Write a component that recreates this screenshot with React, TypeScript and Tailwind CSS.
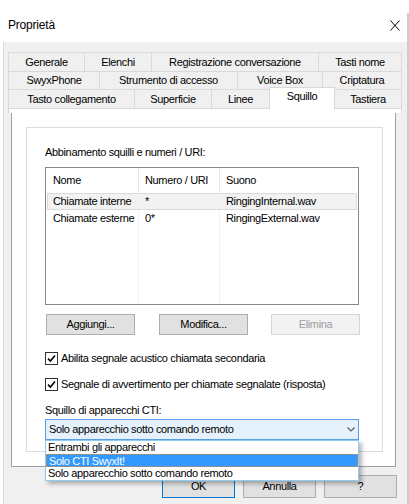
import React from 'react';
import clsx from 'clsx';

interface TabSpec {
  label: string;
  width: string;
  selected?: boolean;
  noLeft?: boolean;
  last?: boolean;
}

interface TabRowProps {
  tabs: TabSpec[];
  height: string;
}

const tabRows: { height: string; tabs: TabSpec[] }[] = [
  {
    height: 'h-[19px]',
    tabs: [
      { label: 'Generale', width: 'w-[76px]' },
      { label: 'Elenchi', width: 'w-[67px]' },
      { label: 'Registrazione conversazione', width: 'w-[167px]' },
      { label: 'Tasti nome', width: 'w-[84px]', last: true },
    ],
  },
  {
    height: 'h-[18px]',
    tabs: [
      { label: 'SwyxPhone', width: 'w-[91px]' },
      { label: 'Strumento di accesso', width: 'w-[138px]' },
      { label: 'Voice Box', width: 'w-[85px]' },
      { label: 'Criptatura', width: 'w-[80px]', last: true },
    ],
  },
  {
    height: 'h-[19px]',
    tabs: [
      { label: 'Tasto collegamento', width: 'w-[126px]' },
      { label: 'Superficie', width: 'w-[77px]' },
      { label: 'Linee', width: 'w-[58px]' },
      { label: 'Squillo', width: 'w-[66px]', selected: true, last: true },
      { label: 'Tastiera', width: 'w-[67px]', noLeft: true, last: true },
    ],
  },
];

const TabRow = ({ tabs, height }: TabRowProps) => {
  return (
    <div className={clsx('flex items-end', height)}>
      {tabs.map((tab) =>
        tab.selected ? (
          <div
            key={tab.label}
            className={clsx(
              'relative z-10 -mb-px flex h-[22px] justify-center border-x border-t border-[#d9d9d9] bg-white pt-[2px]',
              tab.width
            )}
          >
            {tab.label}
          </div>
        ) : (
          <div
            key={tab.label}
            className={clsx(
              'flex h-full items-center justify-center border-t border-[#d9d9d9] bg-[#f0f0f0]',
              tab.width,
              !tab.noLeft && 'border-l',
              tab.last && 'border-r'
            )}
          >
            {tab.label}
          </div>
        )
      )}
    </div>
  );
};

const CheckBox = ({ label }: { label: string }) => {
  return (
    <div className="flex h-[13px] items-center gap-[3px]">
      <div className="h-[13px] w-[13px] border border-[#333333] bg-white">
        <svg viewBox="0 0 11 11" className="h-[11px] w-[11px]">
          <path d="M2 5.6 L4.4 8 L9 2.6" fill="none" stroke="#000" strokeWidth="1.6" />
        </svg>
      </div>
      <span>{label}</span>
    </div>
  );
};

const DialogButton = ({
  label,
  width,
  disabled,
  isDefault,
  height = 'h-[21px]',
  className,
}: {
  label: string;
  width: string;
  disabled?: boolean;
  isDefault?: boolean;
  height?: string;
  className?: string;
}) => {
  return (
    <div
      className={clsx(
        'flex items-center justify-center border',
        width,
        height,
        className,
        disabled
          ? 'border-[#d5d5d5] bg-[#f2f2f2] text-[#a0a0a0]'
          : isDefault
            ? 'border-[#0078d7] bg-[#e1e1e1]'
            : 'border-[#adadad] bg-[#e1e1e1]'
      )}
    >
      {label}
    </div>
  );
};

const ringRows = [
  { name: 'Chiamate interne', number: '*', sound: 'RingingInternal.wav' },
  { name: 'Chiamate esterne', number: '0*', sound: 'RingingExternal.wav' },
];

const RingList = () => {
  return (
    <div className="mt-[8px] flex h-[138px] w-[314px] flex-col border border-[#828790] bg-white">
      <div className="grid h-[25px] grid-cols-[93px_81px_1fr] items-stretch">
        <div className="flex items-center border-r border-[#e3e8ee] pl-[7px]">Nome</div>
        <div className="flex items-center border-r border-[#e3e8ee] pl-[6px]">Numero / URI</div>
        <div className="flex items-center pl-[6px]">Suono</div>
      </div>
      <div className="mx-px grid h-[17px] grid-cols-[91px_81px_1fr] items-center border border-[#dadada] bg-[#f2f2f2]">
        <div className="pl-[5px]">{ringRows[0].name}</div>
        <div className="pl-[6px]">{ringRows[0].number}</div>
        <div className="pl-[6px]">{ringRows[0].sound}</div>
      </div>
      <div className="grid h-[17px] grid-cols-[93px_81px_1fr]">
        <div className="flex items-center border-r border-[#eef1f5] pl-[7px]">{ringRows[1].name}</div>
        <div className="flex items-center border-r border-[#eef1f5] pl-[6px]">{ringRows[1].number}</div>
        <div className="flex items-center pl-[6px]">{ringRows[1].sound}</div>
      </div>
      <div className="grid flex-1 grid-cols-[93px_81px_1fr]">
        <div className="border-r border-[#eef1f5]" />
        <div className="border-r border-[#eef1f5]" />
        <div />
      </div>
    </div>
  );
};

const ctiOptions = ['Entrambi gli apparecchi', 'Solo CTI SwyxIt!', 'Solo apparecchio sotto comando remoto'];

const CtiCombo = () => {
  return (
    <div className="relative mt-[2px] flex h-[21px] w-[314px] items-center justify-between border border-[#5aa0e6] bg-[#e5f1fb] pl-[3px] pr-[3px]">
      <span>Solo apparecchio sotto comando remoto</span>
      <svg viewBox="0 0 8 5" className="h-[5px] w-[8px]">
        <polyline points="0.5,0.5 4,4 7.5,0.5" fill="none" stroke="#606060" strokeWidth="1.2" />
      </svg>
      <div className="absolute -left-px top-[20px] z-20 w-[314px] border border-[#8fcdf0] bg-white shadow-[3px_3px_4px_rgba(0,0,0,0.28)]">
        {ctiOptions.map((option) => (
          <div
            key={option}
            className={clsx(
              'h-[13px] pl-[2px] leading-[12px]',
              option === 'Solo CTI SwyxIt!'
                ? 'border border-dotted border-[#e8842b] bg-[#3399ff] pl-[1px] text-white'
                : ''
            )}
          >
            {option}
          </div>
        ))}
      </div>
    </div>
  );
};

const App = () => {
  return (
    <div className="relative h-[504px] w-[409px] overflow-hidden bg-white font-['Liberation_Sans',Arial,sans-serif] text-[11px] leading-[13px] tracking-[-0.35px] text-black">
      <div className="mt-[13px] flex h-[491px] flex-col border-r-2 border-[#cdcdcd]">
        {/* title bar */}
        <div className="flex h-[29px] justify-between pl-[8px] pr-[7px]">
          <span className="mt-[5px] text-[12px] leading-[14px] tracking-[-0.2px]">Proprietà</span>
          <svg viewBox="0 0 10 11" className="mt-[7px] h-[11px] w-[10px]">
            <path d="M0.5 0.5 L9.5 10.5 M9.5 0.5 L0.5 10.5" stroke="#000" strokeWidth="1" fill="none" />
          </svg>
        </div>

        <div className="ml-[3px] flex-1 border-l border-[#dcdcdc] bg-[#f0f0f0] pt-[10px]">
          <div className="ml-[4px] w-[394px]">
            {tabRows.map((row, i) => (
              <TabRow key={i} tabs={row.tabs} height={row.height} />
            ))}
            <div className="h-[5px] border-x border-t border-[#d9d9d9] bg-white" />

            <div className="ml-[3px] h-[354px] w-[385px] border-x border-b border-[#a0a0a0] bg-white pl-[14px] pt-[14px]">
              <div className="flex h-[325px] w-[357px] flex-col border border-[#dcdcdc] pl-[18px] pt-[18px]">
                <div>Abbinamento squilli e numeri / URI:</div>
                <RingList />
                <div className="mt-[9px] flex pl-px">
                  <DialogButton label="Aggiungi..." width="w-[89px]" />
                  <DialogButton label="Modifica..." width="w-[89px]" className="ml-[24px]" />
                  <DialogButton label="Elimina" width="w-[89px]" className="ml-[23px]" disabled />
                </div>
                <div className="mt-[17px]">
                  <CheckBox label="Abilita segnale acustico chiamata secondaria" />
                </div>
                <div className="mt-[13px]">
                  <CheckBox label="Segnale di avvertimento per chiamate segnalate (risposta)" />
                </div>
                <div className="mt-[13px]">Squillo di apparecchi CTI:</div>
                <CtiCombo />
              </div>
            </div>
          </div>

          <div className="mt-[8px] flex justify-end gap-[8px] pr-[10px]">
            <DialogButton label="OK" width="w-[73px]" height="h-[23px]" isDefault />
            <DialogButton label="Annulla" width="w-[73px]" height="h-[23px]" />
            <DialogButton label="?" width="w-[73px]" height="h-[23px]" />
          </div>
        </div>
      </div>
    </div>
  );
};

export default App;
